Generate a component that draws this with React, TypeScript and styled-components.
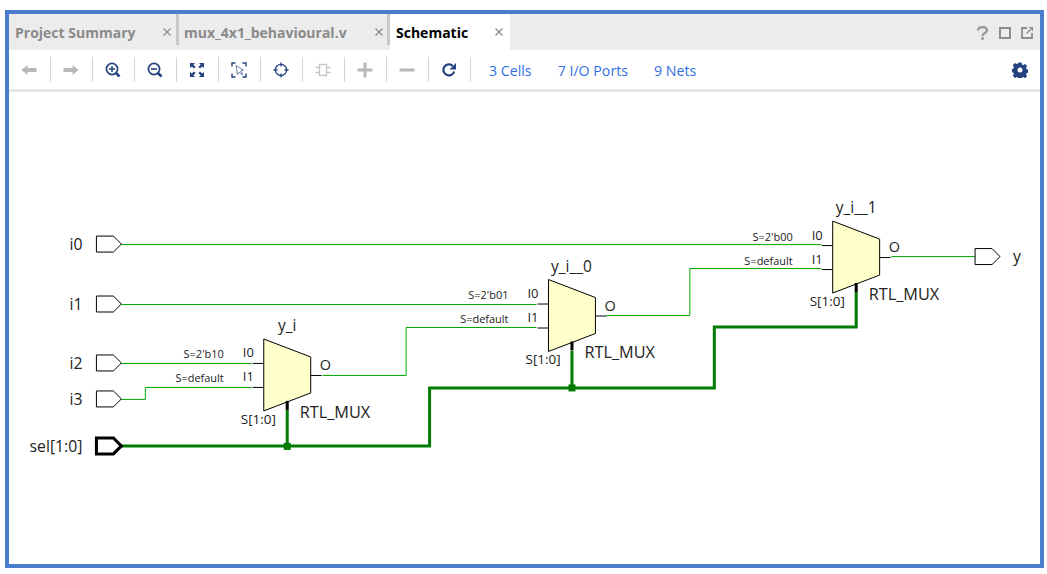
import React from 'react'
import styled, { createGlobalStyle } from 'styled-components'

const Global = createGlobalStyle`
  html, body { margin: 0; padding: 0; background: #fff; }
  body { font-family: "Open Sans", "Noto Sans", sans-serif; }
`

const Page = styled.div`
  width: 1047px;
  height: 574px;
  padding: 10px 3px 6px 5px;
  box-sizing: border-box;
  background: #fff;
`

const Frame = styled.div`
  height: 100%;
  box-sizing: border-box;
  border: 4px solid #4a7dce;
  display: flex;
  flex-direction: column;
`

const TabStrip = styled.div`
  height: 36px;
  flex: none;
  background: #ececec;
  display: flex;
  align-items: stretch;
`

const Tab = styled.div<{ $active?: boolean; $w: number; $left: number; $right: number }>`
  width: ${p => p.$w}px;
  flex: none;
  box-sizing: border-box;
  display: flex;
  align-items: center;
  justify-content: space-between;
  padding: 0 ${p => p.$right}px 0 ${p => p.$left}px;
  background: ${p => (p.$active ? '#fff' : 'transparent')};
  color: ${p => (p.$active ? '#000' : '#8a8a8a')};
  font-size: 14px;
  font-weight: 700;
  white-space: nowrap;
`

const TabDivider = styled.div`
  width: 3px;
  height: 31px;
  flex: none;
  background: #c9c9c9;
`

const Close = styled.span`
  width: 12px;
  color: #8c8c8c;
  display: flex;
  justify-content: center;
`

const WindowIcons = styled.div`
  margin-left: auto;
  padding: 2px 7px 0 0;
  display: flex;
  align-items: center;
  gap: 10px;
`

const Toolbar = styled.div`
  height: 39px;
  flex: none;
  display: flex;
  align-items: center;
  border-bottom: 3px solid #e6e6e6;
  box-sizing: content-box;
`

const ToolCell = styled.div`
  width: 42px;
  height: 25px;
  flex: none;
  box-sizing: border-box;
  border-right: 1px solid #d4d4d4;
  display: flex;
  align-items: center;
  justify-content: center;
  padding-right: 1px;
`

const Links = styled.div`
  display: flex;
  gap: 26px;
  margin: 2px 0 0 18px;
  font-size: 14.2px;
  color: #2f6fe4;
  white-space: nowrap;
`

const Gear = styled.div`
  margin-left: auto;
  padding-right: 12px;
  display: flex;
`

const Canvas = styled.svg`
  display: block;
  flex: 1;
  width: 100%;
  min-height: 0;
  font-family: "Open Sans", "Noto Sans", sans-serif;
  fill: #222;
`

const NAVY = '#254380'
const GREY = '#b8b8b8'
const GREEN = '#00a800'
const BUS = '#007a00'

const X = () => (
  <svg width="10" height="10" viewBox="0 0 10 10">
    <path d="M1.5 1.5l7 7M8.5 1.5l-7 7" stroke="currentColor" strokeWidth="1.3" />
  </svg>
)

const icons: React.ReactNode[] = [
  <path key="back" d="M0.500 8l6-5v3h9v4h-9v3z" fill={GREY} />,
  <path key="fwd" d="M15.500 8l-6-5v3h-9v4h9v3z" fill={GREY} />,
  <g key="zin" fill="none" stroke={NAVY}>
    <circle cx="7" cy="7" r="5.600" strokeWidth="1.700" />
    <path d="M4 7h6M7 4v6" strokeWidth="1.500" />
    <path d="M11 11l3.500 3.500" strokeWidth="2.600" />
  </g>,
  <g key="zout" fill="none" stroke={NAVY}>
    <circle cx="7" cy="7" r="5.600" strokeWidth="1.700" />
    <path d="M4 7h6" strokeWidth="1.600" />
    <path d="M11 11l3.500 3.500" strokeWidth="2.600" />
  </g>,
  <g key="fit" fill={NAVY}>
    <path d="M1 1h5L4.400 2.800 6.600 5 5 6.600 2.800 4.400 1 6zM15 1v5l-1.800-1.600L11 6.600 9.400 5l2.200-2.200L10 1zM1 15v-5l1.800 1.600L5 9.400 6.600 11l-2.200 2.200L6 15zM15 15h-5l1.600-1.800L9.400 11 11 9.400l2.200 2.200L15 10z" />
  </g>,
  <g key="sel" fill="none" stroke={NAVY} strokeWidth="1.400">
    <path d="M1 4.500V1h3.500M11.500 1H15v3.500M15 11.500V15h-3.500M4.500 15H1v-3.500" />
    <path d="M5 3.500l1.500 9 2-2.500 2.500 3 1-1-2.500-3 3-1z" stroke="#6a7fa8" strokeWidth="1" fill="#fff" />
  </g>,
  <g key="target" fill="none" stroke={NAVY} strokeWidth="1.300">
    <circle cx="8" cy="8" r="5.600" />
    <path d="M8 0.500v4M8 11.500v4M0.500 8h4M11.500 8h4" />
  </g>,
  <g key="chip" fill="none" stroke="#c6c6c6" strokeWidth="1.400">
    <rect x="4.500" y="2.500" width="7" height="11" />
    <path d="M0.500 5.500h4M0.500 10.500h4M11.500 5.500h4M11.500 10.500h4" />
  </g>,
  <path key="plus" d="M6.500 0.500h3v6h6v3h-6v6h-3v-6h-6v-3h6z" fill={GREY} />,
  <rect key="minus" x="0.500" y="6.500" width="15" height="3" fill={GREY} />,
  <g key="refresh">
    <path d="M13.200 9.500A5.500 5.500 0 1 1 11.800 4" fill="none" stroke={NAVY} strokeWidth="2.200" />
    <path d="M15 1v6.500H8.500z" fill={NAVY} />
  </g>,
]

type Port = { name: string; y: number; bus?: boolean }
const ports: Port[] = [
  { name: 'i0', y: 244 },
  { name: 'i1', y: 304 },
  { name: 'i2', y: 363 },
  { name: 'i3', y: 399 },
  { name: 'sel[1:0]', y: 446, bus: true },
]

type Mux = { name: string; x: number; y: number; s0: string; s1: string; nameX: number }
const muxes: Mux[] = [
  { name: 'y_i', x: 264, y: 339, s0: "S=2'b10", s1: 'S=default', nameX: 287.500 },
  { name: 'y_i__0', x: 549, y: 279.500, s0: "S=2'b01", s1: 'S=default', nameX: 572 },
  { name: 'y_i__1', x: 833.500, y: 221, s0: "S=2'b00", s1: 'S=default', nameX: 857 },
]

const portShape = (x: number, y: number) =>
  `${x},${y - 8} ${x + 17},${y - 8} ${x + 25},${y} ${x + 17},${y + 8} ${x},${y + 8}`

const wires = [
  'M121 244.500H822',
  'M121 304.500H537',
  'M121 363.500H252',
  'M121 399.500H145.500V387.500H252',
  'M323 375.500H406.500V327.500H537',
  'M607 315.500H690.500V268.500H822',
  'M892 256.500H976',
]

const MuxSymbol = ({ m }: { m: Mux }) => {
  const { x, y } = m
  return (
    <g>
      <polygon
        points={`${x},${y} ${x + 47},${y + 18} ${x + 47},${y + 54} ${x},${y + 72}`}
        fill="#ffffcc"
        stroke="#000"
        strokeWidth="1"
      />
      <path
        d={`M${x - 11} ${y + 24.500}H${x}M${x - 11} ${y + 48.500}H${x}M${x + 47} ${y + 36.500}H${x + 58}`}
        stroke="#000"
        strokeWidth="1"
      />
      <rect x={x + 22} y={y + 62} width="3" height="9" fill="#000" />
      <text x={m.nameX} y={y - 8} fontSize="15.500" textAnchor="middle">{m.name}</text>
      <text x={x - 21} y={y + 18.500} fontSize="13">I0</text>
      <text x={x - 21} y={y + 42.500} fontSize="13">I1</text>
      <text x={x + 56} y={y + 31} fontSize="14.500">O</text>
      <text x={x - 23} y={y + 85} fontSize="13.500">S[1:0]</text>
      <text x={x + 36} y={y + 79} fontSize="16.300">RTL_MUX</text>
      <text x={x - 40} y={y + 19.500} fontSize="11" textAnchor="end">{m.s0}</text>
      <text x={x - 40} y={y + 43.500} fontSize="11" textAnchor="end">{m.s1}</text>
    </g>
  )
}

export default function App() {
  return (
    <>
      <Global />
      <Page>
        <Frame>
          <TabStrip>
            <Tab $w={167} $left={6} $right={3}>Project Summary<Close><X /></Close></Tab>
            <TabDivider />
            <Tab $w={208} $left={5} $right={2}>mux_4x1_behavioural.v<Close><X /></Close></Tab>
            <TabDivider />
            <Tab $w={120} $active $left={6} $right={5}>Schematic<Close><X /></Close></Tab>
            <WindowIcons>
              <svg width="13" height="14" viewBox="0 0 13 14" fill="none" stroke="#9a9a9a" strokeWidth="2.400">
                <path d="M2 4.500C2 0 11 0 11 4.500 11 7 6.500 7 6.500 10" />
                <path d="M6.500 11v3" />
              </svg>
              <svg width="12" height="12" viewBox="0 0 12 12" fill="none" stroke="#8e8e8e" strokeWidth="2">
                <rect x="1" y="1" width="10" height="10" />
              </svg>
              <svg width="12" height="12" viewBox="0 0 12 12" fill="none" stroke="#8e8e8e" strokeWidth="1.800">
                <path d="M6 1H1v10h10V6" />
                <path d="M5.500 6.500L11 1" strokeWidth="1.500" />
                <path d="M8 0.500h3.500V4" strokeWidth="1.200" />
              </svg>
            </WindowIcons>
          </TabStrip>
          <Toolbar>
            {icons.map((icon, i) => (
              <ToolCell key={i}>
                <svg width="16" height="16" viewBox="0 0 16 16">{icon}</svg>
              </ToolCell>
            ))}
            <Links>
              <span>3 Cells</span>
              <span>7 I/O Ports</span>
              <span>9 Nets</span>
            </Links>
            <Gear>
              <svg width="16" height="16" viewBox="0 0 16 16">
                <path
                  fill={NAVY}
                  fillRule="evenodd"
                  d="M6.500 0.500h3l.4 2 1.400.6 1.700-1.100 2.100 2.100-1.100 1.700.6 1.400 2 .4v3l-2 .4-.6 1.400 1.100 1.700-2.100 2.100-1.700-1.100-1.400.6-.4 2h-3l-.4-2-1.400-.6-1.700 1.100L.8 13.600l1.100-1.700-.6-1.400-2-.4v-3l2-.4.6-1.400L.8 3.100 2.900 1 4.600 2.100 6 1.500zM8 5.500a2.500 2.500 0 1 0 0 5 2.500 2.500 0 0 0 0-5z"
                />
              </svg>
            </Gear>
          </Toolbar>
          <Canvas viewBox="9 92 1032 472">
            {wires.map((d, i) => (
              <path key={i} d={d} fill="none" stroke={GREEN} strokeWidth="1" />
            ))}
            <path
              d="M121 446H430V388H715V327H857V292M287.500 410V446M572.500 351V388"
              fill="none"
              stroke={BUS}
              strokeWidth="3"
            />
            <rect x="284" y="443" width="7" height="7" fill={BUS} />
            <rect x="569" y="384.500" width="7" height="7" fill={BUS} />
            {muxes.map(m => <MuxSymbol key={m.name} m={m} />)}
            {ports.map(p => (
              <g key={p.name}>
                <polygon
                  points={portShape(96.500, p.y)}
                  fill="#fff"
                  stroke="#000"
                  strokeWidth={p.bus ? 3 : 1}
                />
                <text x="82.500" y={p.y + 6} fontSize="15.800" textAnchor="end">{p.name}</text>
              </g>
            ))}
            <polygon points={portShape(976, 256.500)} fill="#fff" stroke="#000" strokeWidth="1" />
            <text x="1014" y="262" fontSize="15.800">y</text>
          </Canvas>
        </Frame>
      </Page>
    </>
  )
}
